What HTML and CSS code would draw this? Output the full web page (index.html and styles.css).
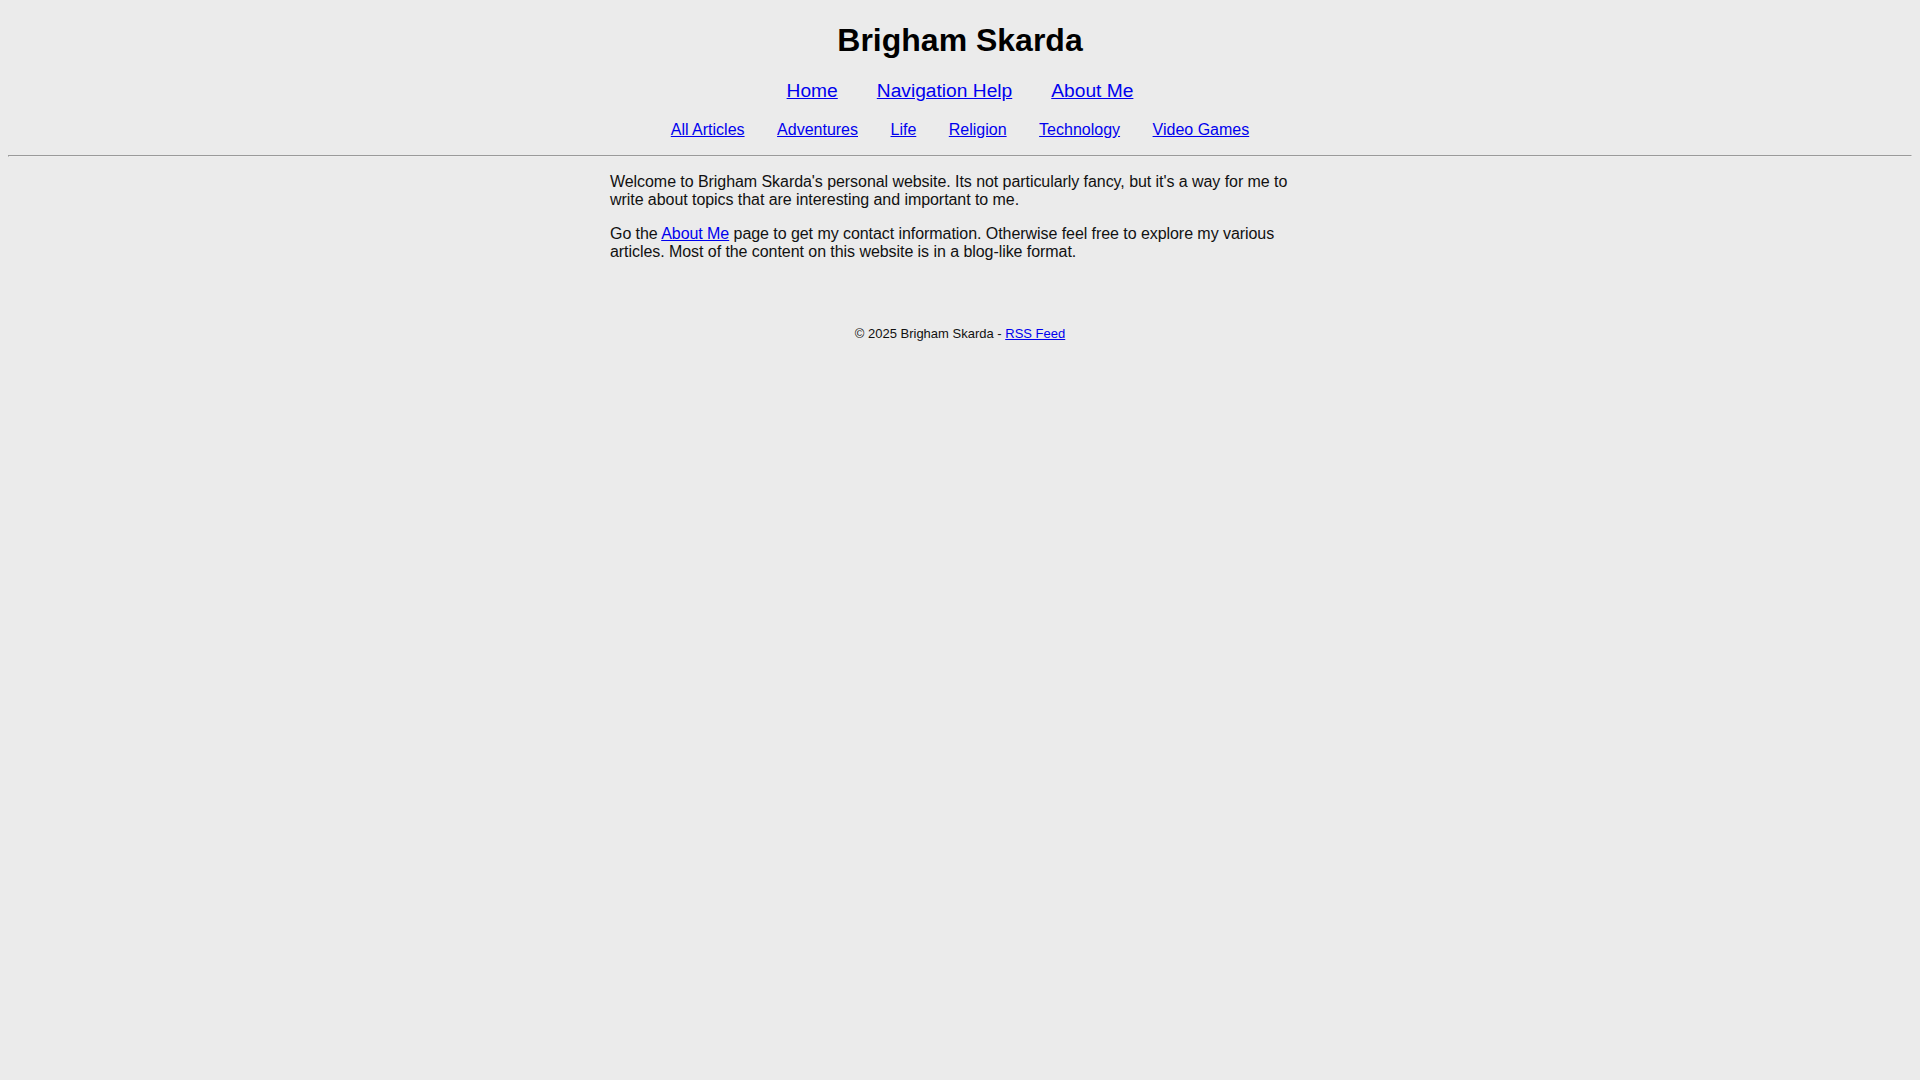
FILE: index.html
```html
<!DOCTYPE html>
<html lang="en">
<head>
<meta charset="utf-8">
<title>Brigham Skarda</title>
<link rel="stylesheet" href="styles.css">
</head>
<body>
<header class="site-header">
  <h1 class="site-title">Brigham Skarda</h1>
  <nav class="nav-main">
    <a href="#">Home</a>
    <a href="#">Navigation Help</a>
    <a href="#">About Me</a>
  </nav>
  <nav class="nav-cats">
    <a href="#">All Articles</a>
    <a href="#">Adventures</a>
    <a href="#">Life</a>
    <a href="#">Religion</a>
    <a href="#">Technology</a>
    <a href="#">Video Games</a>
  </nav>
</header>
<hr class="divider">
<main class="content">
  <p>Welcome to Brigham Skarda's personal website. Its not particularly fancy, but it's a way for me to write about topics that are interesting and important to me.</p>
  <p>Go the <a href="#">About Me</a> page to get my contact information. Otherwise feel free to explore my various articles. Most of the content on this website is in a blog-like format.</p>
</main>
<footer class="site-footer">
  <p>© 2025 Brigham Skarda - <a href="#">RSS Feed</a></p>
</footer>
</body>
</html>
```

FILE: styles.css
```css
html {
  background: #ebebeb;
}
body {
  margin: 8px;
  font-family: "Liberation Sans", Arial, sans-serif;
  font-size: 16px;
  color: #111;
  background: #ebebeb;
}
a {
  color: #0000ee;
}
.site-header {
  text-align: center;
}
.site-title {
  font-size: 32px;
  font-weight: bold;
  margin: 14px 0 21.44px;
  color: #000;
}
.nav-main {
  display: flex;
  justify-content: center;
  gap: 39px;
  font-size: 19.2px;
  margin: 0;
}
.nav-cats {
  display: flex;
  justify-content: center;
  gap: 32.5px;
  font-size: 16px;
  margin: 18.5px 0 16px;
}
.divider {
  margin: 0 0 8px;
}
.content {
  max-width: 700px;
  margin: 0 auto;
}
.content p {
  margin: 16px 0;
  letter-spacing: -0.06px;
}
.site-footer {
  text-align: center;
  font-size: 13px;
  margin-top: 65px;
}
.site-footer p {
  margin: 0;
}
```
